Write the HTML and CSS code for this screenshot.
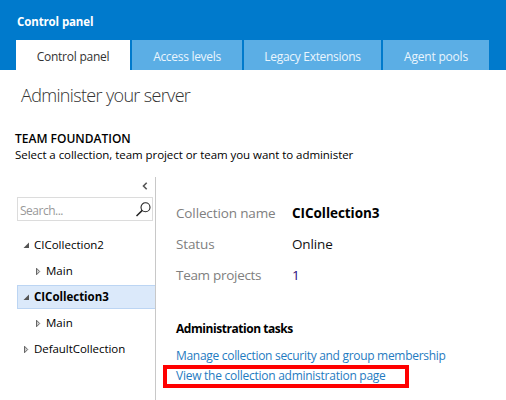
FILE: index.html
```html
<!DOCTYPE html>
<html lang="en">
<head>
<meta charset="utf-8">
<title>Control panel</title>
<link rel="stylesheet" href="styles.css">
</head>
<body>
<header class="header">
  <div class="header-title"><span>Control panel</span></div>
  <nav class="tabs">
    <a class="tab tab-active"><span>Control panel</span></a>
    <a class="tab tab-access"><span>Access levels</span></a>
    <a class="tab tab-legacy"><span>Legacy Extensions</span></a>
    <a class="tab tab-agent"><span>Agent pools</span></a>
  </nav>
</header>
<h1 class="page-title"><span>Administer your server</span></h1>
<section class="intro">
  <h2 class="intro-title"><span>TEAM FOUNDATION</span></h2>
  <p class="intro-text"><span>Select a collection, team project or team you want to administer</span></p>
</section>
<main class="main">
  <aside class="sidebar">
    <div class="collapse"><svg width="6" height="8" viewBox="0 0 6 8"><path d="M4.7 0.8L1.5 4L4.7 7.2" fill="none" stroke="#555" stroke-width="1.6"/></svg></div>
    <div class="search">
      <span class="search-text">Search...</span>
      <svg width="16" height="16" viewBox="0 0 16 16"><g fill="none" stroke="#222"><circle cx="10.5" cy="6.2" r="4.5" stroke-width="1.1"/><path d="M7.3 9.4L1.5 15" stroke-width="1.5"/></g></svg>
    </div>
    <ul class="tree">
      <li class="node"><svg class="arrow" width="7" height="7" viewBox="0 0 7 7"><path d="M6 0.5V6H0.5Z" fill="#555"/></svg><span class="label">CICollection2</span></li>
      <li class="node child"><svg class="arrow" width="7" height="9" viewBox="0 0 7 9"><path d="M1.5 1.2L4.7 4.5L1.5 7.8Z" fill="#ccc" stroke="#666"/></svg><span class="label">Main</span></li>
      <li class="node selected"><svg class="arrow" width="7" height="7" viewBox="0 0 7 7"><path d="M6 0.5V6H0.5Z" fill="#555"/></svg><span class="label label-bold">CICollection3</span></li>
      <li class="node child"><svg class="arrow" width="7" height="9" viewBox="0 0 7 9"><path d="M1.5 1.2L4.7 4.5L1.5 7.8Z" fill="#ccc" stroke="#666"/></svg><span class="label">Main</span></li>
      <li class="node"><svg class="arrow" width="7" height="9" viewBox="0 0 7 9"><path d="M1.5 1.2L4.7 4.5L1.5 7.8Z" fill="#ccc" stroke="#666"/></svg><span class="label label-default">DefaultCollection</span></li>
    </ul>
  </aside>
  <section class="content">
    <dl class="details">
      <dt><span>Collection name</span></dt><dd class="name"><span>CICollection3</span></dd>
      <dt><span>Status</span></dt><dd><span>Online</span></dd>
      <dt class="projects"><span>Team projects</span></dt><dd class="count"><span>1</span></dd>
    </dl>
    <h3 class="tasks-title"><span>Administration tasks</span></h3>
    <a class="link"><span>Manage collection security and group membership</span></a>
    <a class="link highlighted"><span>View the collection administration page</span></a>
  </section>
</main>
</body>
</html>
```
FILE: styles.css
```css
* { box-sizing: border-box; }
body {
  margin: 0;
  height: 400px;
  overflow: hidden;
  display: flex;
  flex-direction: column;
  background: #fff;
  color: #000;
  font: 12px/16px "Open Sans", "Noto Sans", sans-serif;
  white-space: nowrap;
}
h1, h2, h3, p, dl, dd, ul { margin: 0; padding: 0; }
.header { height: 70px; background: #007acc; color: #fff; }
.header-title { height: 40px; padding: 14px 0 0 17px; font-size: 11.5px; font-weight: 700; letter-spacing: -0.12px; }
.tabs { display: flex; gap: 2px; padding-left: 16px; }
.tab { height: 30px; line-height: 33px; text-align: center; background: #5baee5; color: #eaf5fd; font-weight: 500; letter-spacing: -0.3px; width: 110px; }
.tab-active { width: 114px; background: #fff; color: #333; font-weight: 400; letter-spacing: -0.25px; }
.tab-legacy { width: 137px; }
.tab-agent { width: 106px; letter-spacing: -0.2px; }
.page-title { height: 60px; padding: 13px 0 0 21px; font-size: 18px; line-height: 24px; font-weight: 300; color: #333; letter-spacing: -0.66px; }
.intro { height: 47px; padding-left: 15px; }
.intro-title { font-size: 12px; line-height: 17px; font-weight: 600; letter-spacing: 0; }
.intro-text { font-size: 11.5px; line-height: 16px; letter-spacing: -0.05px; }
.main { flex: 1; display: flex; }
.sidebar { width: 156px; padding-left: 17px; border-right: 1px solid #c8c8c8; }
.collapse { height: 20px; padding: 5px 7px 0 0; display: flex; justify-content: flex-end; }
.search { width: 136px; height: 24px; padding: 0 1px 0 2px; border: 1px solid #dcdcdc; display: flex; align-items: center; justify-content: space-between; color: #999; }
.search-text { padding-top: 3px; letter-spacing: -0.5px; }
.tree { list-style: none; padding-top: 12px; display: flex; flex-direction: column; gap: 2px; }
.node { height: 24px; padding-left: 6px; display: flex; align-items: center; gap: 4px; }
.child { padding-left: 18px; }
.selected { padding-left: 5px; background: #dbe9fa; border: 1px solid #bcd5f3; border-right: 0; }
.label { font-size: 11.5px; }
.label-default { letter-spacing: -0.05px; }
.label-bold { font-weight: 700; letter-spacing: -0.02px; }
.content { flex: 1; padding: 21px 0 0 20px; }
.details { display: grid; grid-template-columns: 116px 1fr; grid-auto-rows: 31px; font-size: 13.5px; line-height: 31px; color: #808080; }
dt { letter-spacing: -0.13px; }
.projects { letter-spacing: -0.3px; }
dd { color: #111; letter-spacing: -0.15px; }
.name { font-weight: 700; color: #000; letter-spacing: -0.05px; }
.count { color: #2b0a78; }
.tasks-title { margin-top: 29px; font-size: 12px; line-height: 18px; font-weight: 700; letter-spacing: -0.45px; }
.link { display: block; margin-top: 8px; font-size: 12px; line-height: 19px; color: #1f7bc1; letter-spacing: -0.3px; }
.highlighted { width: 246px; height: 23px; margin: 0 0 0 -13px; padding-left: 9px; line-height: 14px; border: 4px solid #f00; letter-spacing: -0.26px; }
```
